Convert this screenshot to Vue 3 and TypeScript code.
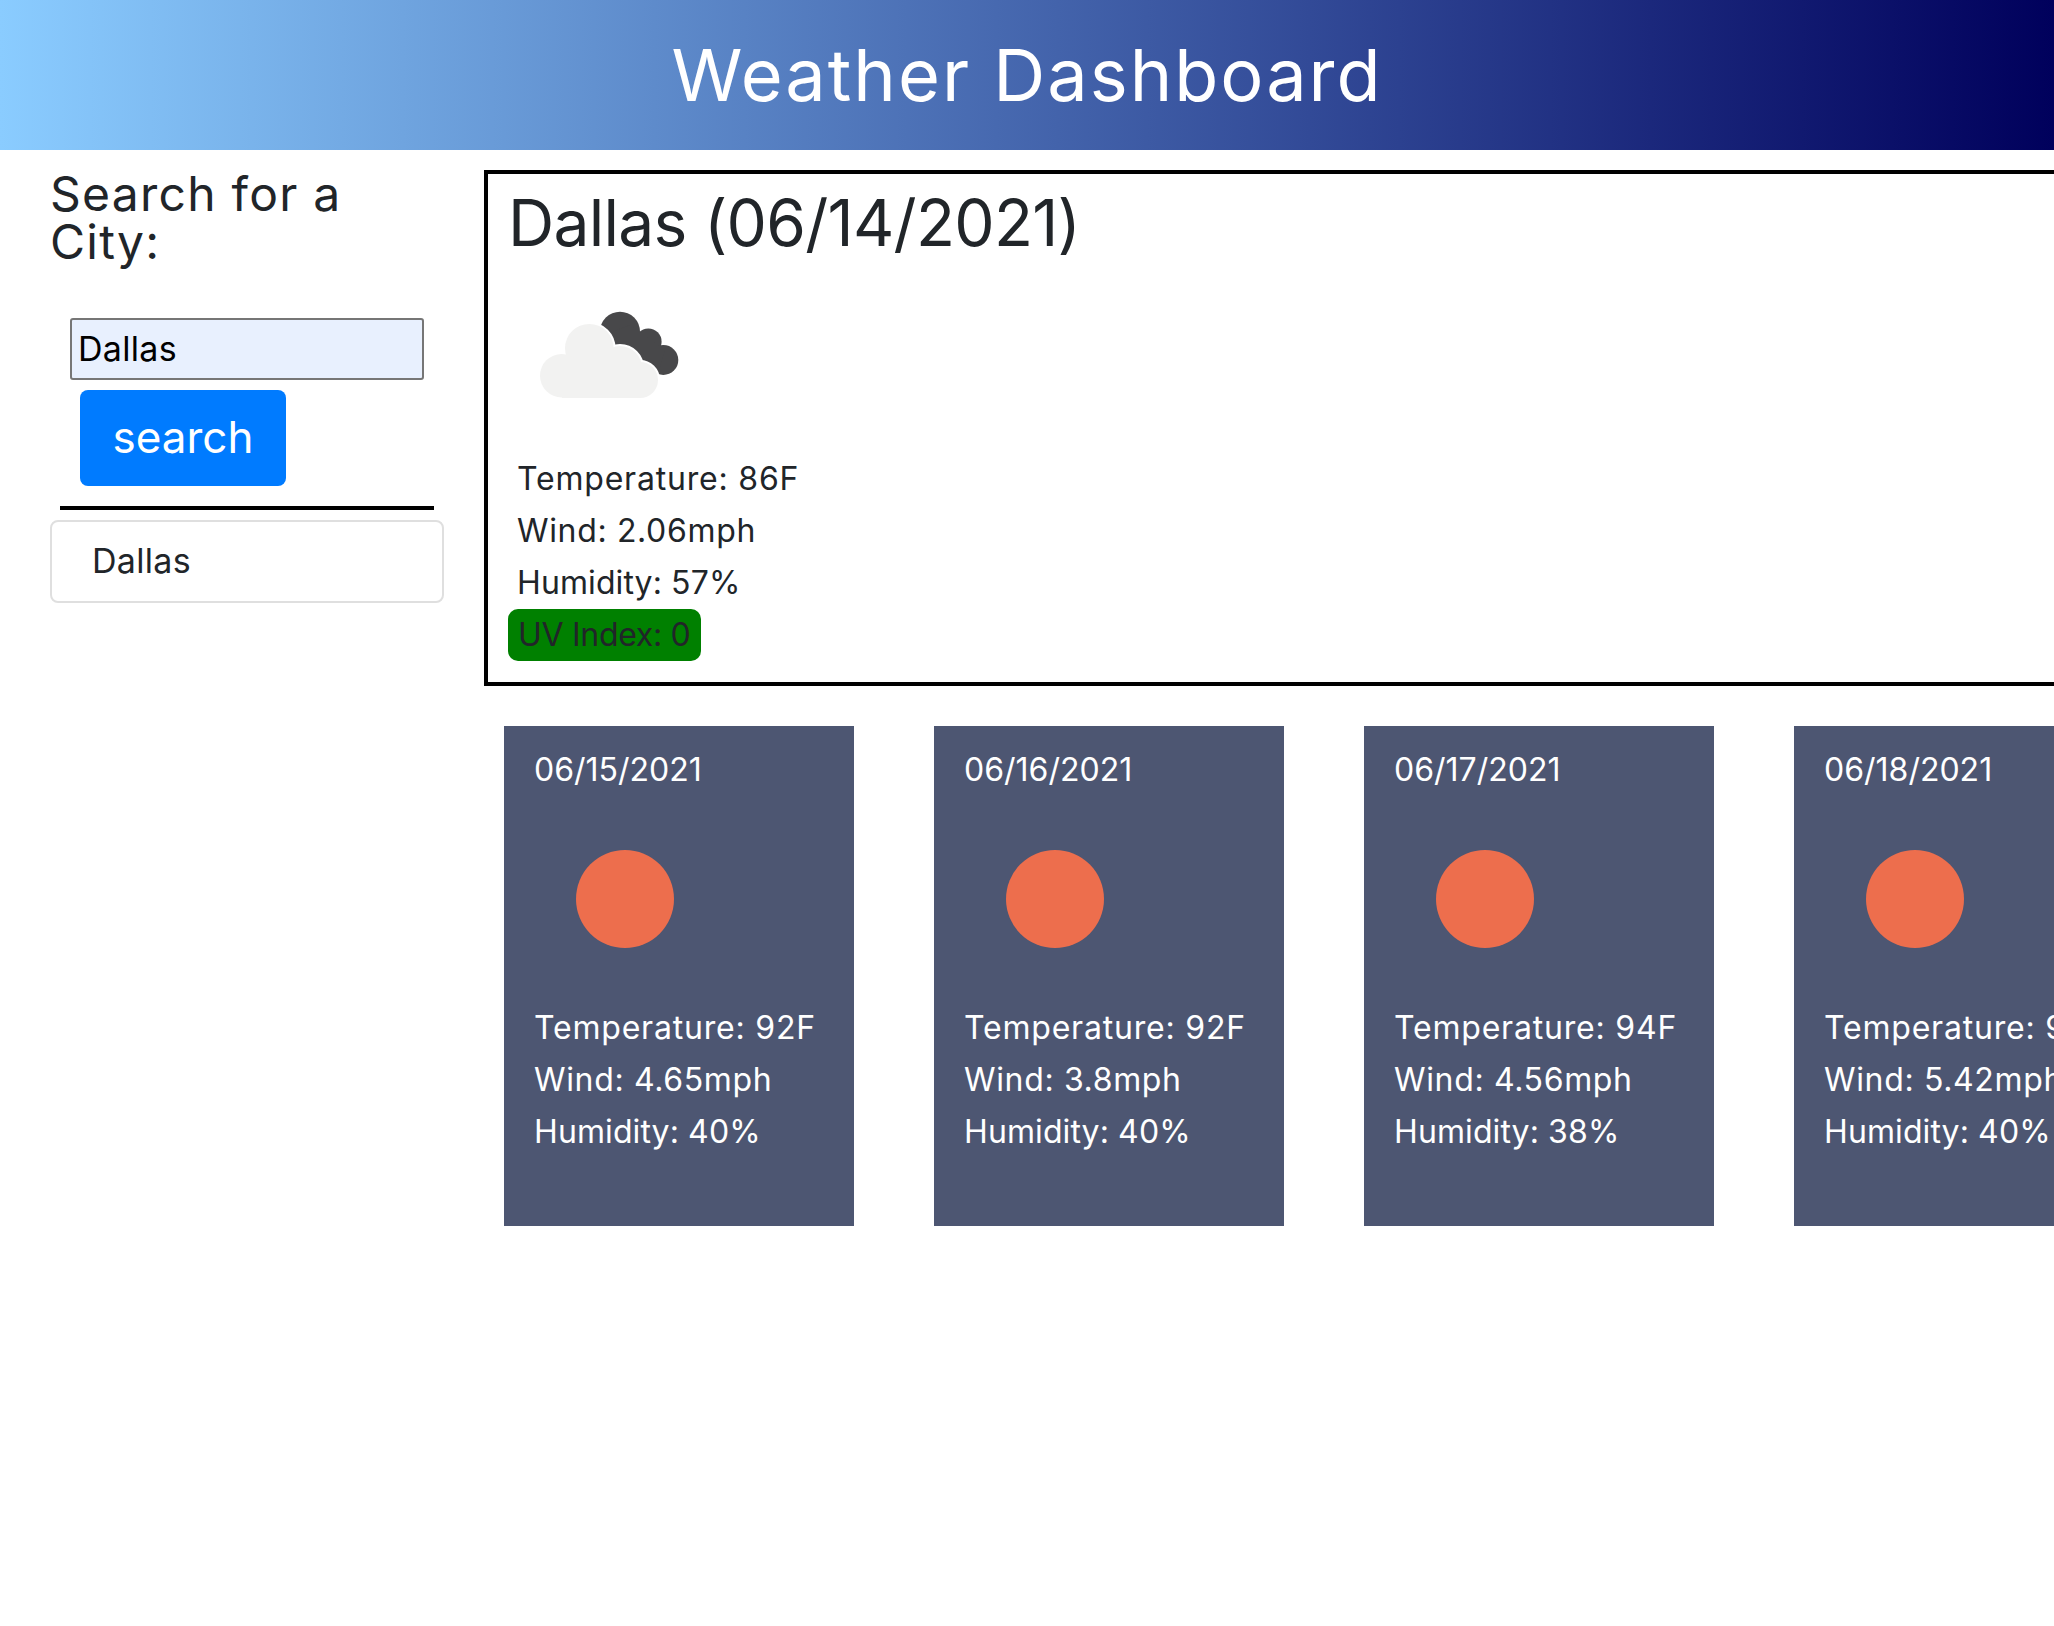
<script setup lang="ts">
interface Forecast {
  date: string;
  temp: string;
  wind: string;
  humidity: string;
}

const forecast: Forecast[] = [
  { date: '06/15/2021', temp: '92F', wind: '4.65mph', humidity: '40%' },
  { date: '06/16/2021', temp: '92F', wind: '3.8mph', humidity: '40%' },
  { date: '06/17/2021', temp: '94F', wind: '4.56mph', humidity: '38%' },
  { date: '06/18/2021', temp: '95F', wind: '5.42mph', humidity: '40%' }
];
</script>

<template>
  <div class="page">
    <header class="top-bar">
      <h1>Weather Dashboard</h1>
    </header>

    <div class="content">
      <aside class="sidebar">
        <h3>Search for a City:</h3>
        <input class="city-input" type="text" value="Dallas" />
        <button class="search-btn" type="button">search</button>
        <hr class="divider" />
        <ul class="history">
          <li>Dallas</li>
        </ul>
      </aside>

      <main class="main">
        <section class="today">
          <h2>Dallas (06/14/2021)</h2>
          <svg class="today-icon" viewBox="0 0 160 110" width="160" height="110">
            <g fill="#48484a">
              <circle cx="90" cy="31.7" r="20" />
              <circle cx="118.3" cy="41.7" r="13.3" />
              <circle cx="133.3" cy="60" r="15" />
              <path d="M72 36 L100 25 L135 50 L128 74 Z" />
            </g>
            <g fill="#f2f2f1" stroke="#fff" stroke-width="4">
              <circle cx="59.3" cy="48.3" r="24.3" />
              <circle cx="90" cy="68" r="22" />
              <circle cx="110" cy="80" r="18" />
              <circle cx="31.7" cy="75.7" r="21.7" />
            </g>
            <g fill="#f2f2f1">
              <circle cx="59.3" cy="48.3" r="24.3" />
              <circle cx="90" cy="68" r="22" />
              <circle cx="110" cy="80" r="18" />
              <circle cx="31.7" cy="75.7" r="21.7" />
              <rect x="32" y="60" width="78" height="38" />
            </g>
          </svg>
          <p class="stat temp">Temperature: 86F</p>
          <p class="stat wind">Wind: 2.06mph</p>
          <p class="stat humidity">Humidity: 57%</p>
          <span class="uv">UV Index: 0</span>
        </section>

        <section class="cards">
          <article v-for="day in forecast" :key="day.date" class="card">
            <p>{{ day.date }}</p>
            <svg class="sun" viewBox="0 0 98 98" width="98" height="98">
              <circle cx="49" cy="49" r="49" fill="#ed6e4d" />
            </svg>
            <p class="temp">Temperature: {{ day.temp }}</p>
            <p class="wind">Wind: {{ day.wind }}</p>
            <p class="humidity">Humidity: {{ day.humidity }}</p>
          </article>
        </section>
      </main>
    </div>
  </div>
</template>

<style>
html,
body {
  overflow: hidden;
  background: #fff;
}
</style>

<style scoped>
.page {
  width: 2054px;
  height: 1626px;
  overflow: hidden;
  font-family: Inter, "Noto Sans", sans-serif;
  color: #212529;
}

.top-bar {
  height: 150px;
  display: flex;
  align-items: center;
  justify-content: center;
  background: linear-gradient(to right, #8accff, #00005c);
}

.top-bar h1 {
  margin: 0;
  font-size: 72px;
  font-weight: 400;
  line-height: 1.2;
  letter-spacing: 2px;
  color: #fff;
}

.content {
  display: flex;
  padding-top: 20px;
}

.sidebar {
  flex: none;
  width: 434px;
  padding-left: 50px;
}

.sidebar h3 {
  margin: 0 0 52px;
  width: 340px;
  font-size: 48px;
  font-weight: 400;
  line-height: 48px;
  letter-spacing: 1.25px;
}

.city-input {
  display: block;
  box-sizing: border-box;
  width: 354px;
  height: 62px;
  margin-left: 20px;
  padding: 0 6px 2px;
  border: 2px solid #767676;
  border-radius: 3px;
  background: #e8f0fe;
  font: inherit;
  font-size: 34px;
  letter-spacing: 0.3px;
  color: #000;
}

.search-btn {
  display: block;
  width: 206px;
  height: 96px;
  margin: 10px 0 0 30px;
  padding: 0 0 2px;
  border: 0;
  border-radius: 8px;
  background: #007bff;
  font: inherit;
  font-size: 44px;
  color: #fff;
}

.divider {
  height: 4px;
  width: 374px;
  margin: 20px 0 10px 10px;
  border: 0;
  background: #000;
}

.history {
  box-sizing: border-box;
  width: 394px;
  height: 83px;
  margin: 0;
  padding: 0 0 0 40px;
  list-style: none;
  border: 2px solid #dfdfdf;
  border-radius: 8px;
  font-size: 34px;
  letter-spacing: 0.3px;
  line-height: 77px;
}

.main {
  flex: none;
  width: 1700px;
}

.today {
  box-sizing: border-box;
  height: 516px;
  padding: 10px 20px 0;
  border: 4px solid #000;
}

.today h2 {
  margin: 0;
  font-size: 64px;
  font-weight: 400;
  line-height: 77px;
  letter-spacing: -0.7px;
}

.today-icon {
  display: block;
  margin: 39px 0 0 22px;
}

.stat {
  margin: 0 0 0 9px;
  font-size: 32px;
  line-height: 52px;
}

.today-icon + .stat {
  margin-top: 43px;
}

.temp {
  letter-spacing: 0.8px;
}

.wind {
  letter-spacing: 0.65px;
}

.humidity {
  letter-spacing: 0.1px;
}

.uv {
  display: inline-block;
  padding: 0 10px;
  border-radius: 10px;
  background: #008000;
  font-size: 32px;
  line-height: 52px;
  letter-spacing: -0.3px;
}

.cards {
  display: flex;
  gap: 80px;
  margin-top: 40px;
  padding-left: 20px;
}

.card {
  flex: none;
  box-sizing: border-box;
  width: 350px;
  height: 500px;
  padding: 18px 0 0 30px;
  background: #4d5672;
  color: #fff;
  font-size: 32px;
  line-height: 52px;
}

.card p {
  margin: 0;
  white-space: nowrap;
}

.sun {
  display: block;
  margin: 54px 0 54px 42px;
}
</style>
